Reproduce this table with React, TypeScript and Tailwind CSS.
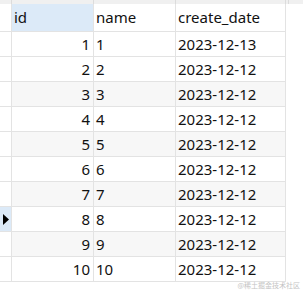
const rows = [
  { id: 1, name: "1", date: "2023-12-13" },
  { id: 2, name: "2", date: "2023-12-12" },
  { id: 3, name: "3", date: "2023-12-12" },
  { id: 4, name: "4", date: "2023-12-12" },
  { id: 5, name: "5", date: "2023-12-12" },
  { id: 6, name: "6", date: "2023-12-12" },
  { id: 7, name: "7", date: "2023-12-12" },
  { id: 8, name: "8", date: "2023-12-12" },
  { id: 9, name: "9", date: "2023-12-12" },
  { id: 10, name: "10", date: "2023-12-12" },
];

const cell = "border-r border-b border-[#e3e3e3] flex items-center";

export default function App() {
  return (
    <div className="relative w-[303px] h-[290px] bg-white overflow-hidden font-['Noto_Sans',sans-serif] text-[15px] text-[#111]">
      <div className="h-[4px] bg-[#f0f0f0] grid grid-cols-[12px_82px_82px_110px_3px]">
        <div className="border-r border-[#dcdcdc]" />
        <div className="border-r border-[#dcdcdc]" />
        <div className="border-r border-[#dcdcdc]" />
        <div className="border-r border-[#dcdcdc]" />
        <div className="border-r border-[#dcdcdc]" />
      </div>
      <div className="grid grid-cols-[12px_82px_82px_110px]">
        <div className={`${cell} h-[28px]`} />
        <div className={`${cell} h-[28px] bg-[#dceaf8] pl-[2px]`}>id</div>
        <div className={`${cell} h-[28px] pl-[2px]`}>name</div>
        <div className={`${cell} h-[28px] pl-[2px]`}>create_date</div>
        {rows.map((r, i) => {
          const shade = i % 2 === 0 && i > 0 ? "bg-[#f7f7f7]" : "bg-white";
          const active = r.id === 8;
          return [
            <div
              key={`i${r.id}`}
              className={`${cell} h-[25px] justify-center ${active ? "bg-[#dceaf8]" : "bg-white"}`}
            >
              {active && (
                <svg width="8" height="11" viewBox="0 0 8 11">
                  <polygon points="1,0 7,5.5 1,11" fill="#000" />
                </svg>
              )}
            </div>,
            <div key={`a${r.id}`} className={`${cell} h-[25px] justify-end pr-[3px] ${shade}`}>
              {r.id}
            </div>,
            <div key={`b${r.id}`} className={`${cell} h-[25px] pl-[2px] ${shade}`}>
              {r.name}
            </div>,
            <div key={`c${r.id}`} className={`${cell} h-[25px] pl-[2px] ${shade}`}>
              {r.date}
            </div>,
          ];
        })}
      </div>
      <div className="absolute right-[3px] bottom-[1px] text-[7px] leading-none text-[#c4c4c4] font-['Noto_Sans_CJK_SC',sans-serif]">
        @稀土掘金技术社区
      </div>
    </div>
  );
}
